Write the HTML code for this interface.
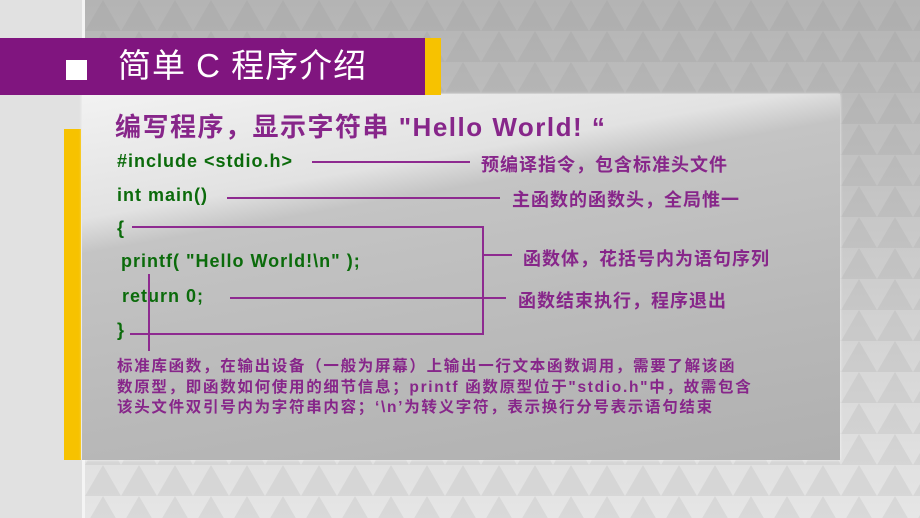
<!DOCTYPE html>
<html><head><meta charset="utf-8"><style>
*{margin:0;padding:0}
body{width:920px;height:518px;overflow:hidden;position:relative;background:#d4d4d4;font-family:"Liberation Sans","Noto Sans CJK SC",sans-serif}
.bg{position:absolute;left:85px;top:0;width:835px;height:518px;background:linear-gradient(180deg,#b4b4b4 0%,#c6c6c6 40%,#dcdcdc 80%,#e6e6e6 100%)}
.tri{position:absolute;left:85px;top:0;width:835px;height:518px;opacity:.13}
.left{position:absolute;left:0;top:0;width:82px;height:518px;background:#e1e1e1}
.wl{position:absolute;left:82px;top:0;width:3px;height:518px;background:#f4f4f4}
.bar{position:absolute;left:0;top:38px;width:425px;height:57px;background:#80157f}
.yb{position:absolute;left:425px;top:38px;width:16px;height:57px;background:#f7c200}
.sq{position:absolute;left:66px;top:60px;width:21px;height:20px;background:#fff}
.title{position:absolute;left:118px;top:44px;color:#fff;font-size:33px;line-height:44px;letter-spacing:1px}
.yl{position:absolute;left:64px;top:129px;width:17px;height:331px;background:#f7c200}
.panel{position:absolute;left:82px;top:94px;width:758px;height:366px;background:linear-gradient(170deg,#f2f2f2 0%,#e2e2e2 25%,#c4c4c4 32%,#b8b8b8 70%,#b0b0b0 100%);box-shadow:0 0 3px rgba(255,255,255,.8)}
.t{position:absolute;white-space:nowrap;font-weight:bold}
.h{color:#87268a;font-size:26px;letter-spacing:1.5px}
.g{color:#0b6b0b;font-size:18px;letter-spacing:1px}
.p{color:#87268a;font-size:18px;letter-spacing:1px}
.s{color:#87268a;font-size:15.5px;line-height:20.5px;letter-spacing:1.7px}
.ln{position:absolute;background:#8e2a90}
</style></head><body>
<div class="bg"></div>
<svg class="tri" width="835" height="518"><defs><pattern id="pt" width="36" height="31" patternUnits="userSpaceOnUse"><polygon points="0,31 18,0 36,31" fill="#888"/></pattern></defs><rect width="835" height="518" fill="url(#pt)"/></svg>
<div class="left"></div><div class="wl"></div>
<div class="yl"></div>
<div class="panel"></div>
<div class="bar"></div><div class="yb"></div><div class="sq"></div>
<div class="title">简单 C 程序介绍</div>
<div class="t h" style="left:115px;top:107px">编写程序，显示字符串 "Hello World! “</div>
<div class="t g" style="left:117px;top:151px">#include &lt;stdio.h&gt;</div>
<div class="t g" style="left:117px;top:185px">int main()</div>
<div class="t g" style="left:117px;top:218px">{</div>
<div class="t g" style="left:121px;top:251px">printf( "Hello World!\n" );</div>
<div class="t g" style="left:122px;top:286px">return 0;</div>
<div class="t g" style="left:117px;top:320px">}</div>
<div class="t p" style="left:481px;top:151px">预编译指令，包含标准头文件</div>
<div class="t p" style="left:512px;top:186px">主函数的函数头，全局惟一</div>
<div class="t p" style="left:523px;top:245px">函数体，花括号内为语句序列</div>
<div class="t p" style="left:518px;top:287px">函数结束执行，程序退出</div>
<div class="t s" style="left:117px;top:357px">标准库函数，在输出设备（一般为屏幕）上输出一行文本函数调用，需要了解该函<br>数原型，即函数如何使用的细节信息；printf 函数原型位于"stdio.h"中，故需包含<br>该头文件双引号内为字符串内容；‘\n’为转义字符，表示换行分号表示语句结束</div>
<div class="ln" style="left:312px;top:161px;width:158px;height:2px"></div>
<div class="ln" style="left:227px;top:197px;width:273px;height:2px"></div>
<div class="ln" style="left:132px;top:226px;width:352px;height:2px"></div>
<div class="ln" style="left:482px;top:226px;width:2px;height:109px"></div>
<div class="ln" style="left:130px;top:333px;width:354px;height:2px"></div>
<div class="ln" style="left:482px;top:254px;width:30px;height:2px"></div>
<div class="ln" style="left:230px;top:297px;width:276px;height:2px"></div>
<div class="ln" style="left:148px;top:274px;width:2px;height:77px"></div>
</body></html>
